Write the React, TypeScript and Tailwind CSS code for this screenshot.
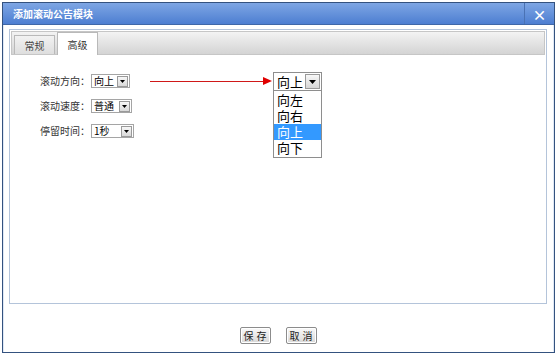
import React from "react";

const cjk = { fontFamily: '"Noto Sans CJK SC", "Noto Sans", sans-serif' };

function MiniSelect({ value, width }: { value: string; width: string }) {
  return (
    <div className={`flex items-center h-[14px] border border-[#a5a5a5] bg-white ${width}`}>
      <span className="flex-1 pl-[2px] text-[10px] leading-[12px] text-black">{value}</span>
      <span className="w-[11px] h-[11px] mr-[1px] border border-[#9a9a9a] bg-gradient-to-b from-[#f7f7f7] to-[#d9d9d9] flex items-center justify-center">
        <svg width="5" height="3" viewBox="0 0 5 3">
          <path d="M0 0H5L2.5 3Z" fill="#000" />
        </svg>
      </span>
    </div>
  );
}

function Row({ label, value, width }: { label: string; value: string; width: string }) {
  return (
    <div className="flex items-center h-[14px]">
      <span className="w-[51px] text-[10px] leading-[12px] text-[#333]">{label}</span>
      <MiniSelect value={value} width={width} />
    </div>
  );
}

function Btn({ a, b }: { a: string; b: string }) {
  return (
    <button className="w-[31px] h-[17px] border border-[#8c8c8c] rounded-[2px] bg-gradient-to-b from-[#fafafa] to-[#d8d8d8] text-[10px] leading-[14px] text-[#222] shadow-[inset_0_0_0_1px_#ffffff] flex items-center justify-center gap-[3px]">
      <span>{a}</span>
      <span>{b}</span>
    </button>
  );
}

export default function App() {
  return (
    <div className="w-[560px] h-[355px] bg-white pl-[2px] pt-[2px]" style={cjk}>
      <div className="w-[553px] h-[351px] border border-[#34527f] bg-white flex flex-col">
        {/* Title bar */}
        <div className="h-[22px] flex items-stretch bg-gradient-to-b from-[#7ea6e4] to-[#4d7ed1] border-b border-[#3f67a8]">
          <div className="flex-1 flex items-center pl-[10px] text-white text-[10px] font-bold">
            添加滚动公告模块
          </div>
          <div className="w-[30px] border-l border-[#4a72b4] flex items-center justify-center text-white font-bold text-[14px] leading-none">
            ×
          </div>
        </div>

        {/* Body */}
        <div className="flex-1 flex flex-col pl-[5px] pr-[6px] pt-[4px] border-x border-[#dfe8f5]">
          <div className="h-[275px] border border-[#b4c4da] p-[1px] flex flex-col">
            {/* Tab strip */}
            <div className="h-[24px] border border-[#c6c6c6] bg-gradient-to-b from-[#f3f3f3] to-[#d4d4d4] flex items-end pl-[2px] gap-[2px]">
              <div className="w-[41px] h-[19px] border border-b-0 border-[#b9b9b9] bg-gradient-to-b from-[#f2f2f2] to-[#dedede] flex items-center justify-center text-[10px] text-[#444]">
                常规
              </div>
              <div className="w-[41px] h-[23px] -mb-[1px] border border-b-0 border-[#b9b9b9] bg-white flex items-center justify-center text-[10px] text-[#333]">
                高级
              </div>
            </div>

            {/* Content */}
            <div className="relative flex-1 bg-white pl-[29px] pt-[19px] flex flex-col gap-[11px]">
              <Row label="滚动方向：" value="向上" width="w-[39px]" />
              <Row label="滚动速度：" value="普通" width="w-[41px]" />
              <Row label="停留时间：" value="1秒" width="w-[43px]" />

              {/* Annotation: arrow + opened select */}
              <div className="absolute left-[139px] top-[22px] flex items-center">
                <div className="w-[113px] h-[1px] bg-[#d01818]" />
                <svg width="9" height="8" viewBox="0 0 9 8">
                  <path d="M0 0L9 4L0 8Z" fill="#e00000" />
                </svg>
              </div>
              <div className="absolute left-[262px] top-[17px] w-[49px]">
                <div className="h-[19px] border border-[#8e8e8e] bg-white flex items-center">
                  <span className="flex-1 pl-[3px] text-[13px] leading-[16px] text-black">向上</span>
                  <span className="w-[15px] h-[15px] mr-[1px] border border-[#9a9a9a] bg-gradient-to-b from-[#f8f8f8] to-[#d6d6d6] flex items-center justify-center">
                    <svg width="7" height="4" viewBox="0 0 7 4">
                      <path d="M0 0H7L3.5 4Z" fill="#000" />
                    </svg>
                  </span>
                </div>
                <div className="border border-t-0 border-[#8e8e8e] bg-white py-[1px]">
                  {["向左", "向右", "向上", "向下"].map((t) => (
                    <div
                      key={t}
                      className={
                        t === "向上"
                          ? "h-[16px] pl-[3px] text-[13px] leading-[16px] bg-[#3399ff] text-white"
                          : "h-[16px] pl-[3px] text-[13px] leading-[16px] text-black"
                      }
                    >
                      {t}
                    </div>
                  ))}
                </div>
              </div>
            </div>
          </div>

          {/* Footer */}
          <div className="flex justify-center gap-[15px] pt-[23px]">
            <Btn a="保" b="存" />
            <Btn a="取" b="消" />
          </div>
        </div>
      </div>
    </div>
  );
}
